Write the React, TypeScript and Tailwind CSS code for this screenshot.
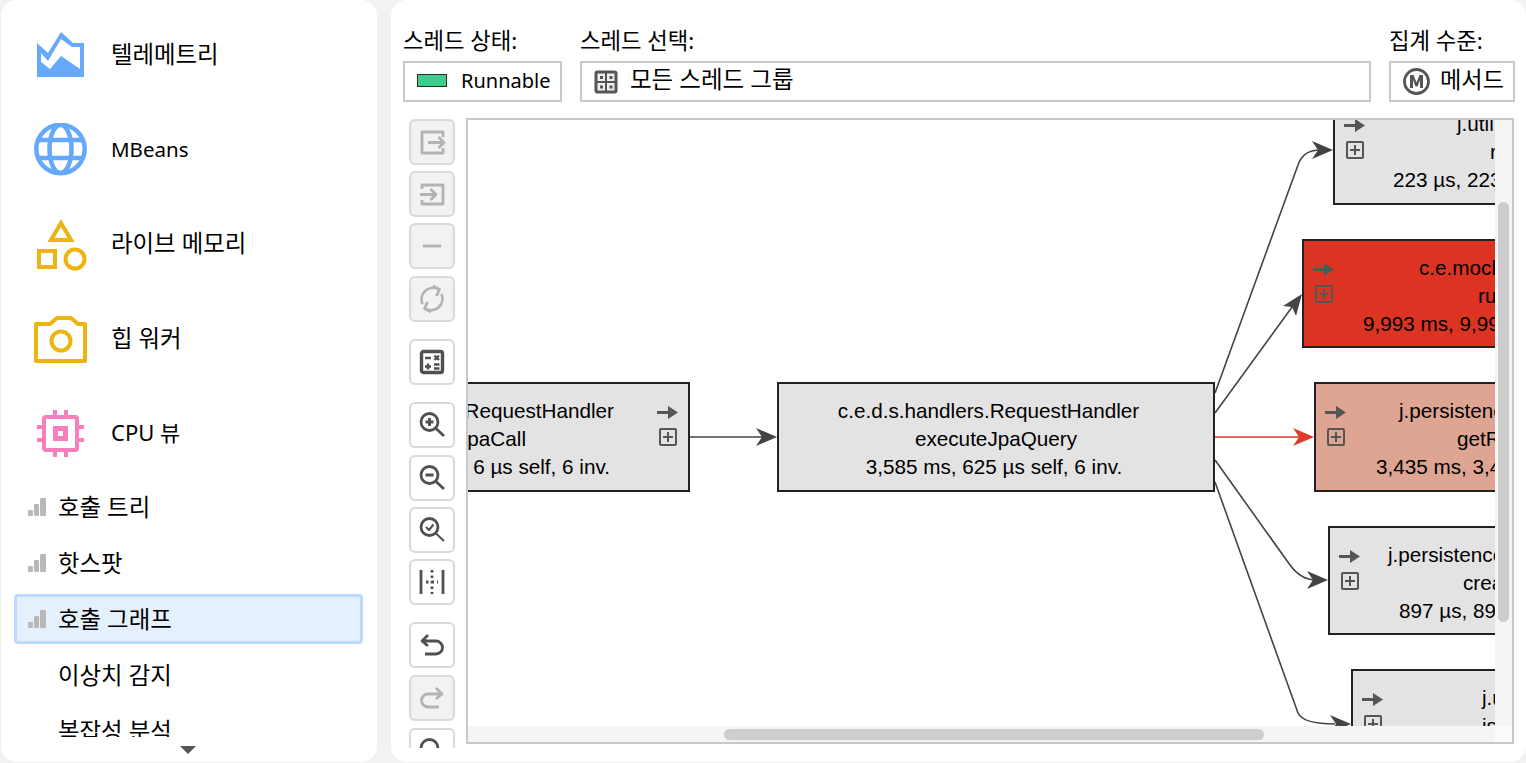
import React from "react";

const uiFont = { fontFamily: '"Noto Sans", "Noto Sans CJK KR", sans-serif' };

function TelemetryIcon() {
  return (
    <svg width="54" height="54" viewBox="34 28 54 54">
      <path
        fill="#66a8fb"
        fillRule="evenodd"
        d="M37 43L48 53L61 32L73 43H84V77H37ZM41 53V62L50 69L61 56L80 69V47H72L61 39L48 61Z"
      />
    </svg>
  );
}

function GlobeIcon() {
  return (
    <svg width="54" height="54" viewBox="0 0 54 54" fill="none" stroke="#66a8fb" strokeWidth="4.500">
      <circle cx="26.500" cy="26" r="24.200" />
      <ellipse cx="26.500" cy="26" rx="11" ry="24" />
      <path d="M4 17H49M4 35H49" />
    </svg>
  );
}

function ShapesIcon() {
  return (
    <svg width="54" height="54" viewBox="34 217 54 54" fill="none" stroke="#ecb40f" strokeWidth="4">
      <path d="M61 223L71 240H51Z" />
      <rect x="39" y="251" width="16" height="16" />
      <circle cx="75" cy="259" r="9.500" />
    </svg>
  );
}

function CameraIcon() {
  return (
    <svg width="54" height="54" viewBox="34 312 54 54" fill="none" stroke="#ecb40f" strokeWidth="4">
      <path strokeLinejoin="round" d="M36 324H50L57 318H71L78 324H85V361H36Z" />
      <circle cx="61" cy="341" r="9.500" />
    </svg>
  );
}

function CpuIcon() {
  return (
    <svg width="54" height="54" viewBox="34 407 54 54" fill="none" stroke="#f77fbe" strokeWidth="4">
      <rect x="44" y="417" width="33" height="33" rx="2" />
      <rect x="55.500" y="428.500" width="10" height="10" strokeWidth="5" />
      <path d="M55 410V416M66 410V416M55 451V457M66 451V457M37 427H43M37 440H43M78 427H84M78 440H84" />
    </svg>
  );
}

function SignalIcon() {
  return (
    <span className="flex h-[18px] w-[18px] items-end gap-px">
      <span className="h-[6px] w-[5px] rounded-[1px] bg-[#b8b8b8]" />
      <span className="h-[12px] w-[5px] rounded-[1px] bg-[#b8b8b8]" />
      <span className="h-[18px] w-[6px] rounded-[1px] bg-[#b8b8b8]" />
    </span>
  );
}

const bigItems = [
  { label: "텔레메트리", icon: <TelemetryIcon />, row: "h-[96px]", size: "text-[23.4px]" },
  { label: "MBeans", icon: <GlobeIcon />, row: "h-[93px]", size: "text-[20.5px]" },
  { label: "라이브 메모리", icon: <ShapesIcon />, row: "h-[95px]", size: "text-[23.4px]" },
  { label: "힙 워커", icon: <CameraIcon />, row: "h-[95px]", size: "text-[23.4px]" },
  { label: "CPU 뷰", icon: <CpuIcon />, row: "h-[95px]", size: "mb-[4px] text-[22px]" },
];

const smallItems = [
  { label: "호출 트리", signal: true },
  { label: "핫스팟", signal: true },
  { label: "호출 그래프", signal: true, active: true },
  { label: "이상치 감지" },
  { label: "복잡성 분석" },
];

function Sidebar() {
  return (
    <aside className="relative ml-px h-[762px] w-[376px] shrink-0 rounded-2xl bg-white text-black">
      <div className="h-[737px] overflow-hidden pt-[7px]">
        {bigItems.map((item) => (
          <div key={item.label} className={`flex items-center pl-[33px] ${item.row}`}>
            <span className="w-[77px] shrink-0">{item.icon}</span>
            <span className={`leading-none ${item.size}`}>{item.label}</span>
          </div>
        ))}
        <div className="mt-px flex flex-col gap-[6px]">
          {smallItems.map((item) => (
            <div
              key={item.label}
              className={
                item.active
                  ? "ml-[13px] flex h-[50px] w-[349px] shrink-0 items-center rounded-[4px] border-[3px] border-[#bbdafe] bg-[#e5f0fd] pl-[11px]"
                  : "ml-[13px] flex h-[50px] w-[349px] shrink-0 items-center border-[3px] border-transparent pl-[11px]"
              }
            >
              <span className="w-[30px] shrink-0">{item.signal && <SignalIcon />}</span>
              <span className="mt-[2px] text-[23.4px] leading-none">{item.label}</span>
            </div>
          ))}
        </div>
      </div>
      <span className="absolute bottom-[8px] left-[179px] h-0 w-0 border-x-[8px] border-t-[8px] border-x-transparent border-t-[#555555]" />
    </aside>
  );
}

function ThreadGroupIcon() {
  return (
    <svg width="24" height="24" viewBox="0 0 24 24">
      <rect x="0.500" y="0.500" width="23" height="23" rx="3" fill="#555555" />
      <rect x="3.500" y="3.500" width="7.500" height="7.500" fill="#eeeeee" />
      <rect x="13" y="3.500" width="7.500" height="7.500" fill="#eeeeee" />
      <rect x="3.500" y="13" width="7.500" height="7.500" fill="#eeeeee" />
      <rect x="13" y="13" width="7.500" height="7.500" fill="#eeeeee" />
      <path fill="#555555" d="M6 6h3v3H6zM15.500 6h3v3h-3zM6 15.500h3v3H6zM15.500 15.500h3v3h-3z" />
    </svg>
  );
}

function MethodIcon() {
  return (
    <svg width="27" height="27" viewBox="0 0 27 27">
      <circle cx="13.500" cy="13.500" r="12" fill="none" stroke="#555555" strokeWidth="2.800" />
      <path fill="#555555" d="M7 20V7h3.500l3 7.500 3-7.500H20v13h-3v-8l-2.500 6.500h-2L10 12v8z" />
    </svg>
  );
}

function Header() {
  return (
    <div className="flex gap-[18px] pl-[12px] text-black">
      <div className="w-[159px] shrink-0">
        <div className="h-[35px] text-[22.3px] leading-[29px]">스레드 상태:</div>
        <div className="flex h-[41px] items-center border-2 border-[#c9c9c9] pb-[2px] pl-[12px]">
          <span className="h-[13px] w-[30px] border border-[#2b2b2b] bg-[#3dcd8a]" />
          <span className="ml-[14px] text-[20px] leading-none">Runnable</span>
        </div>
      </div>
      <div className="w-[791px] shrink-0">
        <div className="h-[35px] text-[22.3px] leading-[29px]">스레드 선택:</div>
        <div className="flex h-[41px] items-center border-2 border-[#c9c9c9] pl-[12px]">
          <ThreadGroupIcon />
          <span className="mb-[3px] ml-[12px] text-[23.500px] leading-none">모든 스레드 그룹</span>
        </div>
      </div>
      <div className="w-[126px] shrink-0">
        <div className="h-[35px] text-[22.3px] leading-[29px]">집계 수준:</div>
        <div className="flex h-[41px] items-center border-2 border-[#c9c9c9] pl-[12px]">
          <MethodIcon />
          <span className="mb-[3px] ml-[10px] text-[23.200px] leading-none">메서드</span>
        </div>
      </div>
    </div>
  );
}

const iconProps = {
  width: 30,
  height: 30,
  viewBox: "0 0 30 30",
  fill: "none",
  stroke: "currentColor",
  strokeWidth: 2.8,
  strokeLinejoin: "round" as const,
};

const toolIcons: Record<string, React.ReactNode> = {
  exit: (
    <svg {...iconProps}>
      <path d="M26 10V5H5V26H26V21M11 15.500H27M21.500 10L27 15.500L21.500 21" />
    </svg>
  ),
  enter: (
    <svg {...iconProps}>
      <path d="M5 10V6H26V25H5V21M3 15.500H19M13.500 10L19 15.500L13.500 21" />
    </svg>
  ),
  minus: (
    <svg {...iconProps}>
      <path d="M6 15H24" />
    </svg>
  ),
  refresh: (
    <svg {...iconProps}>
      <path d="M5.500 20A11.500 11.500 0 0 1 21 5M24.500 10A11.500 11.500 0 0 1 9 25M16 2L22.500 5.500L19.500 12M14 28L7.500 24.500L10.500 18" />
    </svg>
  ),
  calc: (
    <svg {...iconProps}>
      <rect x="4.500" y="4.500" width="21" height="21" rx="2" strokeWidth="3.400" />
      <path strokeWidth="2.400" d="M8 11H14M17.500 8.500L22 13M22 8.500L17.500 13M8 19.500H14M11 16.500V22.500M17 17.500H22.500M17 21.500H22.500" />
    </svg>
  ),
  zoomIn: (
    <svg {...iconProps}>
      <circle cx="12.500" cy="12" r="8.500" />
      <path d="M19 18.500L27 26M8.500 12H16.500M12.500 8V16" />
    </svg>
  ),
  zoomOut: (
    <svg {...iconProps}>
      <circle cx="12.500" cy="12" r="8.500" />
      <path d="M19 18.500L27 26M8.500 12H16.500" />
    </svg>
  ),
  zoomFit: (
    <svg {...iconProps}>
      <circle cx="12.500" cy="12" r="8.500" />
      <path strokeWidth="2" d="M19 18.500L27 26M9 12L12 15L16.500 9.500" />
    </svg>
  ),
  center: (
    <svg {...iconProps}>
      <path d="M4 3V27M26 3V27" />
      <path strokeDasharray="2.500 3" d="M15 3V27M9 15H21" />
    </svg>
  ),
  undo: (
    <svg {...iconProps}>
      <path d="M11 5L5 11L11 16M5 11H19A6.500 6.500 0 0 1 19 24H8" />
    </svg>
  ),
  redo: (
    <svg {...iconProps}>
      <path d="M19 5L25 11L19 16M25 11H11A6.500 6.500 0 0 0 11 24H22" />
    </svg>
  ),
  search: (
    <svg {...iconProps}>
      <circle cx="12.500" cy="12" r="8.500" />
      <path d="M19 18.500L27 26" />
    </svg>
  ),
};

const tools = [
  { name: "exit", off: true, gap: "" },
  { name: "enter", off: true, gap: "mt-[6px]" },
  { name: "minus", off: true, gap: "mt-[6px]" },
  { name: "refresh", off: true, gap: "mt-[7px]" },
  { name: "calc", gap: "mt-[17px]" },
  { name: "zoomIn", gap: "mt-[17px]" },
  { name: "zoomOut", gap: "mt-[7px]" },
  { name: "zoomFit", gap: "mt-[6px]" },
  { name: "center", gap: "mt-[6px]" },
  { name: "undo", gap: "mt-[17px]" },
  { name: "redo", off: true, gap: "mt-[7px]" },
  { name: "search", gap: "mt-[7px]" },
];

function Toolbar() {
  return (
    <div className="mt-px flex h-[629px] w-[46px] shrink-0 flex-col overflow-hidden">
      {tools.map((tool) => (
        <button
          key={tool.name}
          className={
            tool.off
              ? `flex h-[46px] w-[46px] shrink-0 items-center justify-center rounded-md border-2 border-[#d9d9d9] bg-[#f2f2f2] text-[#b3b3b3] ${tool.gap}`
              : `flex h-[46px] w-[46px] shrink-0 items-center justify-center rounded-md border-2 border-[#d9d9d9] bg-white text-[#505050] ${tool.gap}`
          }
        >
          {toolIcons[tool.name]}
        </button>
      ))}
    </div>
  );
}

type GraphLine = { text: string; cls: string };

type GraphNode = {
  box: string;
  icons?: string;
  lines: GraphLine[];
};

const graphNodes: GraphNode[] = [
  {
    box: "left-[-300px] top-[262px] w-[522px] h-[110px] bg-[#e3e3e3]",
    icons: "right-[10px]",
    lines: [
      { text: "c.e.d.s.handlers.RequestHandler", cls: "text-right pr-[74px]" },
      { text: "executeJpaCall", cls: "text-right pr-[162px]" },
      { text: "6 µs self, 6 inv.", cls: "text-right pr-[78px]" },
    ],
  },
  {
    box: "left-[309px] top-[262px] w-[438px] h-[110px] bg-[#e3e3e3]",
    lines: [
      { text: "c.e.d.s.handlers.RequestHandler", cls: "text-center pr-[15px]" },
      { text: "executeJpaQuery", cls: "text-center" },
      { text: "3,585 ms, 625 µs self, 6 inv.", cls: "text-center pr-[4px]" },
    ],
  },
  {
    box: "left-[865px] top-[-25px] w-[400px] h-[110px] bg-[#e3e3e3]",
    icons: "left-[9px]",
    lines: [
      { text: "j.util", cls: "pl-[122px]" },
      { text: "run", cls: "pl-[155px]" },
      { text: "223 µs, 223 µs", cls: "pl-[58px]" },
    ],
  },
  {
    box: "left-[834px] top-[119px] w-[400px] h-[109px] bg-[#dc3322]",
    icons: "left-[9px]",
    lines: [
      { text: "c.e.mock", cls: "pl-[115px]" },
      { text: "run", cls: "pl-[174px]" },
      { text: "9,993 ms, 9,993 ms", cls: "pl-[59px]" },
    ],
  },
  {
    box: "left-[846px] top-[262px] w-[400px] h-[110px] bg-[#dea593]",
    icons: "left-[9px]",
    lines: [
      { text: "j.persistence", cls: "pl-[83px]" },
      { text: "getResult", cls: "pl-[141px]" },
      { text: "3,435 ms, 3,435 ms", cls: "pl-[60px]" },
    ],
  },
  {
    box: "left-[860px] top-[406px] w-[400px] h-[109px] bg-[#e3e3e3]",
    icons: "left-[9px]",
    lines: [
      { text: "j.persistence", cls: "pl-[58px]" },
      { text: "create", cls: "pl-[133px]" },
      { text: "897 µs, 897 µs", cls: "pl-[69px]" },
    ],
  },
  {
    box: "left-[883px] top-[549px] w-[400px] h-[110px] bg-[#e3e3e3]",
    icons: "left-[9px]",
    lines: [
      { text: "j.util", cls: "pl-[129px]" },
      { text: "isEmpty", cls: "pl-[129px]" },
    ],
  },
];

function NodeControls({ side }: { side: string }) {
  return (
    <div className={`absolute top-[22px] flex flex-col items-center gap-[9px] ${side}`}>
      <svg width="21" height="13" viewBox="0 0 21 13">
        <path fill="#555555" d="M0 5H11V0L21 6.500L11 13V8H0Z" />
      </svg>
      <span className="flex h-[18px] w-[18px] items-center justify-center rounded-[2px] border-2 border-[#555555]">
        <svg width="10" height="10" viewBox="0 0 10 10">
          <path fill="#555555" d="M4 0h2v4h4v2H6v4H4V6H0V4h4z" />
        </svg>
      </span>
    </div>
  );
}

function ArrowHead({ x, y, color }: { x: number; y: number; color: string }) {
  return (
    <path
      fill={color}
      d={`M${x} ${y}L${x - 21} ${y - 9}L${x - 15} ${y}L${x - 21} ${y + 9}Z`}
    />
  );
}

function Edges() {
  return (
    <svg
      className="absolute left-0 top-0"
      width="1044"
      height="622"
      viewBox="468 120 1044 622"
      fill="none"
      stroke="#444444"
      strokeWidth="1.600"
    >
      <path d="M690 437H765" />
      <path d="M1215 393L1298 165Q1303 150 1320 150" />
      <path d="M1215 413L1295 303" />
      <path d="M1215 437H1300" stroke="#d9382a" />
      <path d="M1215 460L1290 565Q1301 580 1316 580" />
      <path d="M1215 482L1298 713Q1303 724 1335 724" />
      <g stroke="none">
        <ArrowHead x={777} y={437} color="#444444" />
        <ArrowHead x={1333} y={150} color="#444444" />
        <path fill="#444444" d="M1302 294L1283 306L1292 307L1296 316Z" />
        <ArrowHead x={1314} y={437} color="#e03c27" />
        <ArrowHead x={1328} y={580} color="#444444" />
        <ArrowHead x={1351} y={724} color="#444444" />
      </g>
    </svg>
  );
}

function Graph() {
  return (
    <div
      className="relative h-[626px] w-[1048px] shrink-0 overflow-hidden border-2 border-[#c9c9c9] bg-white text-[20.700px] leading-[28px] text-black"
      style={{ fontFamily: '"Liberation Sans", Arial, sans-serif' }}
    >
      {graphNodes.map((node) => (
        <div key={node.box} className={`absolute border-2 border-[#222222] pt-[13px] ${node.box}`}>
          {node.lines.map((line) => (
            <div key={line.text} className={`h-[28px] whitespace-nowrap ${line.cls}`}>
              {line.text}
            </div>
          ))}
          {node.icons && <NodeControls side={node.icons} />}
        </div>
      ))}
      <Edges />
      <div className="absolute bottom-0 right-0 top-0 w-[17px] bg-[#f5f5f5]">
        <div className="absolute left-[3px] top-[82px] h-[420px] w-[11px] rounded-md bg-[#cdcdcd]" />
      </div>
      <div className="absolute bottom-0 left-0 right-[17px] h-[16px] bg-[#f5f5f5]">
        <div className="absolute left-[256px] top-[3px] h-[11px] w-[540px] rounded-md bg-[#cdcdcd]" />
      </div>
      <div className="absolute bottom-0 right-0 h-[16px] w-[17px] bg-[#fbfbfb]" />
    </div>
  );
}

export default function App() {
  return (
    <div className="flex h-[763px] w-[1526px] gap-[14px] overflow-hidden bg-[#f2f2f2]" style={uiFont}>
      <Sidebar />
      <main className="h-[762px] w-[1135px] shrink-0 rounded-2xl bg-white pt-[26px]">
        <Header />
        <div className="mt-[16px] flex gap-[11px] pl-[18px]">
          <Toolbar />
          <Graph />
        </div>
      </main>
    </div>
  );
}
